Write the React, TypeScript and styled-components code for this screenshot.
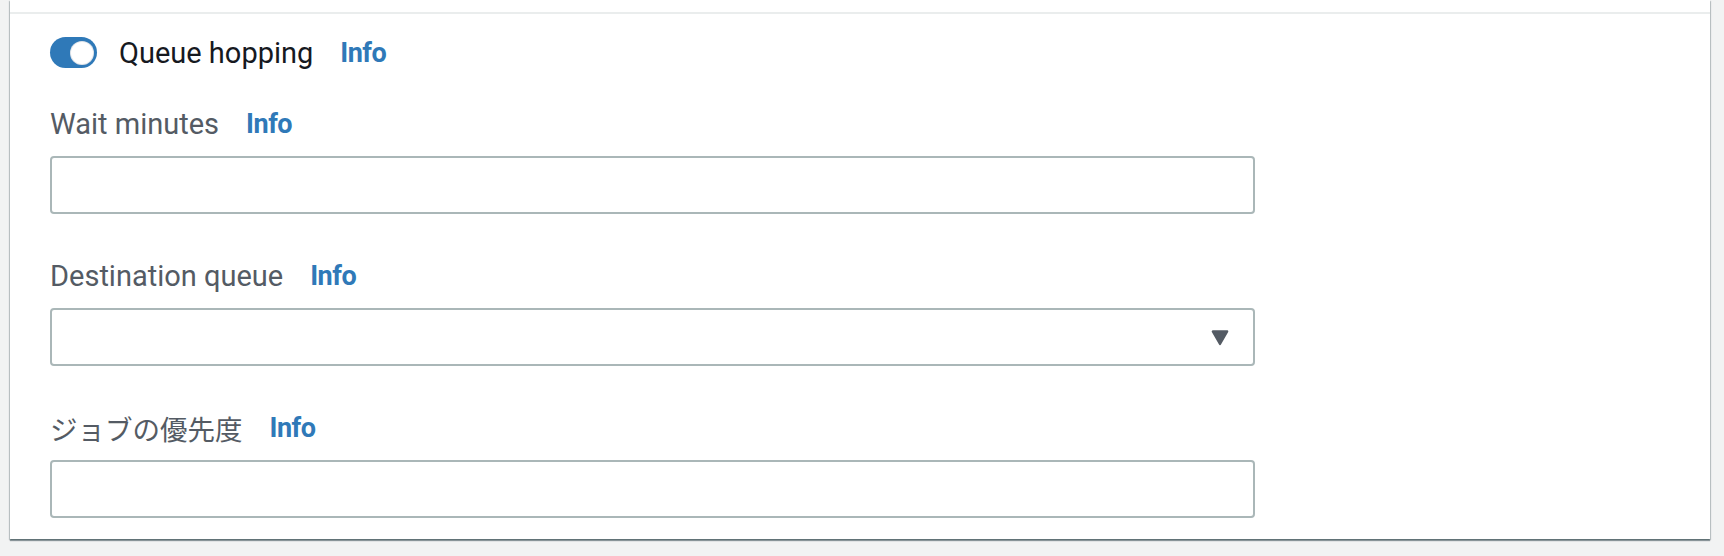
import React from 'react';
import styled, { createGlobalStyle } from 'styled-components';

const GlobalStyle = createGlobalStyle`
  html, body {
    margin: 0;
    padding: 0;
    background: #f2f3f3;
  }
  body {
    font-family: Roboto, "Noto Sans CJK JP", "Liberation Sans", sans-serif;
    -webkit-font-smoothing: antialiased;
  }
`;

const Page = styled.div`
  padding: 0 14px 16px 10px;
`;

const Card = styled.section`
  background: #fff;
  box-shadow: 0 2px 1px 0 rgba(0, 28, 36, 0.4), 1px 1px 1px 0 rgba(0, 28, 36, 0.18),
    -1px 1px 1px 0 rgba(0, 28, 36, 0.18);
`;

const CardHeader = styled.div`
  height: 12px;
  border-bottom: 2px solid #eaeded;
`;

const CardBody = styled.div`
  padding: 23px 41px 21px 40px;
  display: flex;
  flex-direction: column;
`;

const ToggleRow = styled.label`
  display: flex;
  align-items: center;
  height: 31px;
  margin-bottom: 38px;
`;

const Track = styled.span<{ $on: boolean }>`
  position: relative;
  width: 47px;
  height: 31px;
  border-radius: 16px;
  background: ${(p) => (p.$on ? '#2f79b8' : '#aab7b8')};
  flex-shrink: 0;
`;

const Knob = styled.span<{ $on: boolean }>`
  position: absolute;
  top: 3.5px;
  left: ${(p) => (p.$on ? '19.5px' : '3.5px')};
  width: 24px;
  height: 24px;
  border-radius: 50%;
  background: #fff;
  box-shadow: inset 0 0 0 1px rgba(0, 40, 80, 0.12);
`;

const ToggleText = styled.span`
  margin-left: 22px;
  font-size: 29px;
  line-height: 36px;
  color: #16191f;
`;

const InfoLink = styled.a`
  margin-left: 27px;
  font-family: Roboto, "Liberation Sans", sans-serif;
  font-size: 27px;
  font-weight: 700;
  letter-spacing: -0.5px;
  color: #2f79b8;
  text-decoration: none;
  cursor: pointer;
`;

const Field = styled.div`
  display: flex;
  flex-direction: column;
  width: 1205px;
  & + & {
    margin-top: 44px;
  }
`;

const FieldLabel = styled.div<{ $cjk?: boolean }>`
  display: flex;
  align-items: center;
  height: 36px;
  margin-bottom: 14px;
  font-size: ${(p) => (p.$cjk ? '27.5px' : '29px')};
  color: #545b64;
`;

const Control = styled.div`
  position: relative;
  height: 58px;
  box-sizing: border-box;
  border: 2px solid #aab7b8;
  border-radius: 4px;
  background: #fff;
  display: flex;
  align-items: center;
  justify-content: flex-end;
  padding-right: 24px;
`;

const TextInput = styled.input`
  flex: 1;
  height: 100%;
  border: none;
  outline: none;
  background: transparent;
  padding: 0 20px;
  font-family: inherit;
  font-size: 28px;
`;

const Caret = () => (
  <svg width="18" height="18" viewBox="0 0 16 16">
    <path
      d="M1.6 3 L14.4 3 L8 14.2 Z"
      fill="#545b64"
      stroke="#545b64"
      strokeWidth="2"
      strokeLinejoin="round"
    />
  </svg>
);

const App: React.FC = () => {
  const fields = [
    { label: 'Wait minutes', select: false },
    { label: 'Destination queue', select: true },
    { label: 'ジョブの優先度', select: false, cjk: true }
  ];

  return (
    <>
      <GlobalStyle />
      <Page>
        <Card>
          <CardHeader />
          <CardBody>
            <ToggleRow>
              <Track $on>
                <Knob $on />
              </Track>
              <ToggleText>Queue hopping</ToggleText>
              <InfoLink>Info</InfoLink>
            </ToggleRow>
            {fields.map((field, index) => (
              <Field key={index}>
                <FieldLabel $cjk={field.cjk}>
                  {field.label}
                  <InfoLink>Info</InfoLink>
                </FieldLabel>
                <Control>
                  {field.select ? <Caret /> : <TextInput type="text" />}
                </Control>
              </Field>
            ))}
          </CardBody>
        </Card>
      </Page>
    </>
  );
};

export default App;
